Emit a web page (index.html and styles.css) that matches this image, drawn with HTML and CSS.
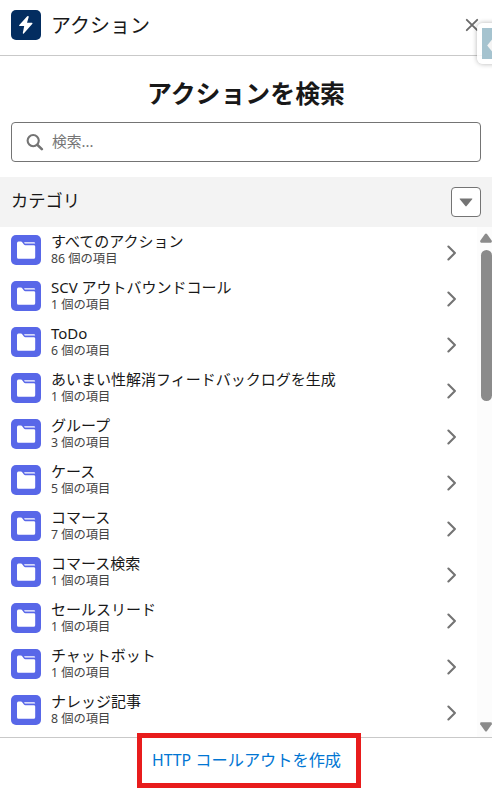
FILE: index.html
```html
<!DOCTYPE html>
<html lang="ja">
<head>
    <meta charset="UTF-8">
    <meta name="viewport" content="width=device-width, initial-scale=1.0">
    <title>アクション</title>
    <link rel="stylesheet" href="styles.css">
</head>
<body>
    <svg class="symbols" width="0" height="0">
        <symbol id="folder" viewBox="0 0 30 30">
            <path d="M6 8.2Q6 6.5 7.5 6.5H9.8Q10.8 6.5 11.4 7.4L12.7 9.3Q13.4 10.2 14.4 10.2H22.8Q24.2 10.2 24.2 11.6V22.2Q24.2 23.8 22.6 23.8H7.6Q6 23.8 6 22.2Z"/>
            <path d="M13 7.3H23Q24 7.3 24.2 8.6H13.8Z"/>
        </symbol>
        <symbol id="chevron" viewBox="0 0 10 16">
            <path d="M1.4 1.6L7.9 8L1.4 14.4" fill="none" stroke="#747474" stroke-width="2.1" stroke-linecap="round" stroke-linejoin="round"/>
        </symbol>
    </svg>

    <div class="panel">
        <header class="panel-header">
            <span class="header-icon">
                <svg width="30" height="30" viewBox="0 0 30 30"><path d="M16.2 6.3L8.1 15.3Q7.8 16 8.6 16H13.2L11.8 23.1Q11.9 24.2 12.8 23.5L21.4 13.7Q21.8 12.9 20.9 12.8H16L17.8 6.8Q17.4 5.3 16.2 6.3Z" fill="#fff"/></svg>
            </span>
            <h1>アクション</h1>
            <button class="close-button" aria-label="閉じる">
                <svg width="14" height="14" viewBox="0 0 14 14"><path d="M1.8 1.8L12.2 12.2M12.2 1.8L1.8 12.2" stroke="#6b6b6b" stroke-width="1.9" stroke-linecap="round"/></svg>
            </button>
        </header>

        <section class="search">
            <h2>アクションを検索</h2>
            <div class="search-box">
                <svg width="18" height="18" viewBox="0 0 18 18"><circle cx="7.2" cy="7.6" r="5.6" fill="none" stroke="#747474" stroke-width="2.1"/><path d="M11.4 11.8L15.8 16.2" stroke="#747474" stroke-width="2.6" stroke-linecap="round"/></svg>
                <input type="text" placeholder="検索...">
            </div>
        </section>

        <div class="category-bar">
            <h3>カテゴリ</h3>
            <button class="menu-button" aria-label="メニュー">
                <svg width="14" height="9" viewBox="0 0 14 9"><path d="M1 0.5H13Q13.7 0.7 13.2 1.3L7.6 8.1Q7 8.7 6.4 8.1L0.8 1.3Q0.3 0.7 1 0.5Z" fill="#747474"/></svg>
            </button>
        </div>

        <div class="list-area">
            <ul class="category-list" id="categoryList"></ul>
            <div class="scrollbar">
                <svg class="arrow-up" width="12" height="10" viewBox="0 0 12 10"><path d="M5 1Q6 0 7 1L11.8 7.8Q12.2 9.7 10.8 9.7H1.2Q-0.2 9.7 0.2 7.8Z" fill="#8b8b8b"/></svg>
                <div class="thumb"></div>
                <svg class="arrow-down" width="12" height="10" viewBox="0 0 12 10"><path d="M5 9Q6 10 7 9L11.8 2.2Q12.2 0.3 10.8 0.3H1.2Q-0.2 0.3 0.2 2.2Z" fill="#8b8b8b"/></svg>
            </div>
        </div>

        <footer class="panel-footer">
            <a href="#"><span class="latin">HTTP</span> コールアウトを作成</a>
            <div class="highlight"></div>
        </footer>

        <div class="side-tab">
            <div class="side-tab-inner">
                <svg width="10" height="31" viewBox="0 0 10 31"><path d="M10 11.5L5.2 17.5L10 23.5Z" fill="#f4f4f4"/></svg>
            </div>
        </div>
    </div>

    <script>
        const categories = [
            ['すべてのアクション', 86],
            ['SCV アウトバウンドコール', 1],
            ['ToDo', 6],
            ['あいまい性解消フィードバックログを生成', 1],
            ['グループ', 3],
            ['ケース', 5],
            ['コマース', 7],
            ['コマース検索', 1],
            ['セールスリード', 1],
            ['チャットボット', 1],
            ['ナレッジ記事', 8]
        ];

        const list = document.getElementById('categoryList');

        categories.forEach(([name, count]) => {
            const item = document.createElement('li');
            item.innerHTML = `
                <svg class="folder-icon"><use href="#folder"/></svg>
                <div class="item-text">
                    <p class="item-name">${name}</p>
                    <p class="item-count">${count} 個の項目</p>
                </div>
                <svg class="chevron"><use href="#chevron"/></svg>
            `;
            list.appendChild(item);
        });
    </script>
</body>
</html>
```
FILE: styles.css
```css
* {
    box-sizing: border-box;
}

body {
    margin: 0;
    font-family: "Noto Sans", "Noto Sans CJK JP", sans-serif;
    background-color: #fff;
    color: #181818;
}

h1, h2, h3, p, ul {
    margin: 0;
    padding: 0;
    font-weight: normal;
}

svg {
    display: block;
    flex: none;
}

button {
    padding: 0;
    border: none;
    background: none;
    cursor: pointer;
}

.symbols {
    position: absolute;
}

.panel {
    position: relative;
    display: flex;
    flex-direction: column;
    height: 788px;
    overflow: hidden;
}

/* Cabecera */
.panel-header {
    display: flex;
    align-items: center;
    height: 56px;
    padding: 0 13px 5px 11px;
    border-bottom: 1px solid #c9c9c9;
}

.header-icon {
    width: 30px;
    height: 30px;
    border-radius: 5px;
    background-color: #032d60;
}

.panel-header h1 {
    flex: 1;
    margin-left: 10px;
    padding-top: 2px;
    font-size: 20px;
    line-height: 30px;
}

/* Búsqueda */
.search {
    height: 121px;
    padding: 18px 11px 0;
}

.search h2 {
    font-size: 24.9px;
    font-weight: bold;
    line-height: 38px;
    text-align: center;
}

.search-box {
    display: flex;
    align-items: center;
    height: 40px;
    margin-top: 10px;
    padding-left: 14px;
    border: 1px solid #747474;
    border-radius: 4px;
}

.search-box input {
    flex: 1;
    margin-left: 8px;
    padding: 0 0 2px;
    border: none;
    outline: none;
    font-family: inherit;
    font-size: 14.8px;
    line-height: 22px;
}

.search-box input::placeholder {
    color: #747474;
}

.category-bar {
    display: flex;
    justify-content: space-between;
    align-items: center;
    height: 50px;
    padding: 0 11px;
    background-color: #f3f3f3;
}

.category-bar h3 {
    padding-bottom: 2px;
    font-size: 17.3px;
    line-height: 26px;
}

.menu-button {
    display: flex;
    justify-content: center;
    align-items: center;
    width: 30px;
    height: 30px;
    border: 1px solid #747474;
    border-radius: 4px;
    background-color: #fff;
}

/* Lista */
.list-area {
    display: flex;
    height: 510px;
}

.category-list {
    flex: 1;
    list-style: none;
}

.category-list li {
    display: flex;
    align-items: center;
    height: 46px;
    padding: 0 20px 0 11px;
}

.folder-icon {
    width: 30px;
    height: 30px;
    border-radius: 5px;
    background-color: #5867e8;
    fill: #fff;
}

.item-text {
    flex: 1;
    margin-left: 10px;
}

.item-name {
    padding-bottom: 1px;
    font-size: 15px;
    line-height: 18px;
}

.item-count {
    padding-bottom: 1px;
    font-size: 12.3px;
    line-height: 16px;
    color: #444;
}

.chevron {
    width: 10px;
    height: 16px;
    margin-top: 5px;
}

.scrollbar {
    display: flex;
    flex-direction: column;
    width: 15px;
    padding: 6px 0 5px 3px;
    background-color: #fcfcfc;
}

.thumb {
    width: 11px;
    height: 151px;
    margin: 7px 0 0 1px;
    border-radius: 6px;
    background-color: #8b8b8b;
}

.arrow-down {
    margin-top: auto;
}

/* Pie */
.panel-footer {
    position: relative;
    height: 51px;
    border-top: 1px solid #c9c9c9;
    text-align: center;
}

.panel-footer a {
    padding-left: 1px;
    font-size: 16.2px;
    line-height: 44px;
    color: #0176d3;
    text-decoration: none;
}

.panel-footer .latin {
    font-size: 15.8px;
}

.highlight {
    position: absolute;
    top: -5px;
    left: 137px;
    width: 224px;
    height: 55px;
    border: 5px solid #e81c1c;
}

.side-tab {
    position: absolute;
    top: 23px;
    right: -10px;
    width: 25px;
    height: 41px;
    padding: 5px;
    border-radius: 6px;
    background-color: rgba(255, 255, 255, 0.85);
    box-shadow: 0 0 5px rgba(0, 0, 0, 0.3);
}

.side-tab-inner {
    height: 31px;
    background-color: #a5c3cf;
}
```
